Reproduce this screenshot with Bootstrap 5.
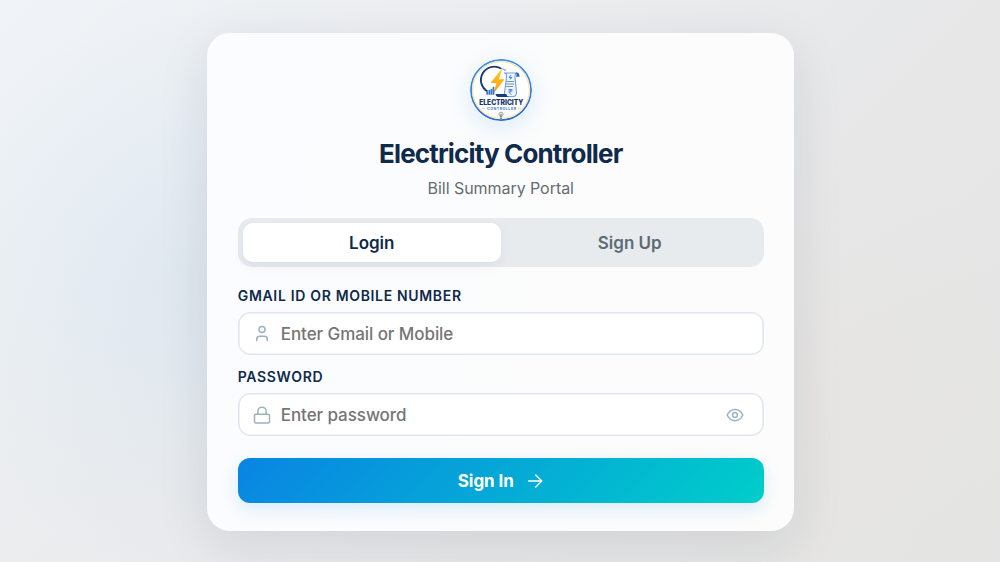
<!DOCTYPE html>
<html lang="en">
<head>
<meta charset="utf-8">
<meta name="viewport" content="width=device-width, initial-scale=1">
<title>Electricity Controller</title>
<link href="https://cdn.jsdelivr.net/npm/bootstrap@5.3.0/dist/css/bootstrap.min.css" rel="stylesheet">
<style>
body{font-family:Inter,"Liberation Sans",sans-serif;color:#0f2a4a;height:100vh;overflow:hidden;
background:radial-gradient(circle at 20% 50%,rgba(9,132,227,.055),transparent 300px),radial-gradient(circle at 82% 72%,rgba(253,203,110,.03),transparent 250px),linear-gradient(135deg,#f0f4f8 0%,#ebedef 35%,#e7e7e8 65%,#e4e4e4 100%)}
.login-card{width:587px;height:498.5px;margin-top:32.5px;margin-left:1.5px;padding:26.5px 30.5px 0;border:0;border-radius:23px;
background:linear-gradient(100deg,#fafcff,#fcfcfc 65%);box-shadow:0 14px 52px rgba(15,30,60,.10)}
.logo{width:62px;height:62px;border-radius:50%;box-shadow:0 6px 24px rgba(9,132,227,.14)}
.title{font-size:26px;line-height:32px;font-weight:700;letter-spacing:-.86px;margin-top:16.5px}
.subtitle{font-size:16px;line-height:22px;letter-spacing:-.05px;color:#636e72;margin-top:7px}
.tabs{height:49px;margin-top:19.5px;padding:5px;border-radius:14px;background:#e8ebee}
.tab{border:0;border-radius:10px;background:transparent;color:#5e6b72;font-size:17px;font-weight:600;padding:1.5px 0 0}
.tab.active{background:#fff;color:#0f2a4a;box-shadow:0 4px 12px rgba(15,30,60,.06)}
.form-area{margin-top:20px}
.field-label{font-size:14px;line-height:18px;font-weight:600;letter-spacing:.67px;margin:0 0 7px}
.second-label{margin-top:13px}
.field{height:43px;border:1px solid #dfe6f0;border-radius:12px;background:#fff;box-shadow:inset 0 0 0 .6px #dfe6f0;padding:0 19px 0 14px}
.field svg{color:#9db1bf;flex:none}
.field input{border:0;outline:0;background:transparent;font-size:17px;font-weight:500;letter-spacing:-.07px;padding:2px 0 0;margin-left:10px;min-width:0}
.field input::placeholder{color:#757575;opacity:1}
.submit{height:45px;margin-top:22.3px;border:0;border-radius:12px;color:#fff;font-size:17px;font-weight:700;letter-spacing:-.08px;padding:1px 0 0;background:linear-gradient(135deg,#0984e3,#00cec9);box-shadow:0 6px 18px rgba(9,132,227,.14)}
.line-icon{fill:none;stroke:currentColor;stroke-width:2;stroke-linecap:round;stroke-linejoin:round}
</style>
</head>
<body class="d-flex justify-content-center align-items-start">
<main class="login-card d-flex flex-column">
<svg class="logo align-self-center flex-shrink-0" viewBox="0 0 62 62" role="img" aria-label="Electricity Controller logo">
<defs>
<linearGradient id="ring" x1="0" y1="0" x2="0" y2="1"><stop stop-color="#368ff3"/><stop offset="1" stop-color="#2b6bd0"/></linearGradient>
<linearGradient id="bolt" x1="0" y1="0" x2="0" y2="1"><stop stop-color="#ffc928"/><stop offset="1" stop-color="#ff9d00"/></linearGradient>
</defs>
<circle cx="31" cy="31" r="30.1" fill="#fff" stroke="url(#ring)" stroke-width="1.8"/>
<circle cx="31" cy="31" r="28.4" fill="none" stroke="#ffd982" stroke-width=".9"/>
<path d="M17.500 32.500A13 13 0 0 1 31 9.500" fill="none" stroke="#153b78" stroke-width="1.9"/>
<path d="M31 9.500q2.800.300 4.800 2" fill="none" stroke="#5a8ed4" stroke-width="1.200"/>
<path d="M34 14H46q3 0 2.800 3.500M35 14q2 1 1.500 4l-2 16q-.5 3.500-3.500 3.500h12.500q2.500 0 3-3.500l-1.500-16q-.2-4 2.500-4" fill="#eaf3ff" stroke="#6c9fe2" stroke-width="1.100"/>
<path d="M46 13.500q3.800 0 3.300 4.200h-3q.5-3-.3-4.200" fill="#2d65b4"/>
<path d="M25.500 35h11q.2 2.800 3 3H28.500q-2.500 0-3-3" fill="#173d7a"/>
<path d="M36.500 22.500h7.500M36.300 25h7.700M36 27.500h7" stroke="#6881aa" stroke-width=".85"/>
<path d="M40.800 16.200l-1.500 2.300h2.400l-1.500 2" fill="none" stroke="#287be0" stroke-width="1"/>
<path d="M38.500 30.500h4M38.500 32h4M39 30.500q3 .5 2 2-.8 1-2 .8l2.500 2.500" fill="none" stroke="#3975cd" stroke-width=".8"/>
<path d="M32.500 9L20.500 24h6l-3 10.500 11-14.200h-5.700L32.500 9" fill="url(#bolt)"/>
<path d="M17.200 35.700v-3.200M19.300 35.700v-4.700M21.400 35.700v-5.700M23.500 35.700v-8" stroke="#3477cf" stroke-width="1.700"/>
<text x="31.300" y="45.700" text-anchor="middle" font-size="7.200" font-weight="800" textLength="44" lengthAdjust="spacingAndGlyphs" fill="#19376c" stroke="#19376c" stroke-width=".15">ELECTRICITY</text>
<text x="31.500" y="50.600" text-anchor="middle" font-size="3.600" font-weight="700" textLength="29" fill="#3979cf">CONTROLLER</text>
<path d="M12 49.300h3M48 49.300h3" stroke="#f4c66c" stroke-width=".8"/>
<circle cx="31" cy="55.300" r="2.100" fill="#ffe9af" stroke="#8695a6" stroke-width=".8"/>
<path d="M29.800 58h2.400M30.200 59.500h1.600M31 55v3" stroke="#557399" stroke-width=".9"/>
<path d="M27.500 54l-.8-.5M34.500 54l.8-.5M27.300 56.500h-.7M34.700 56.500h.7" stroke="#efbb54" stroke-width=".6"/>
</svg>
<h1 class="title text-center mb-0">Electricity Controller</h1>
<p class="subtitle text-center mb-0">Bill Summary Portal</p>
<div class="tabs d-flex flex-shrink-0" role="tablist">
<button class="tab active flex-fill w-50" role="tab" aria-selected="true">Login</button>
<button class="tab flex-fill w-50" role="tab" aria-selected="false">Sign Up</button>
</div>
<form class="form-area d-flex flex-column">
<label class="field-label" for="account">GMAIL ID OR MOBILE NUMBER</label>
<div class="field d-flex align-items-center">
<svg class="line-icon" width="18" height="18" viewBox="0 0 24 24"><path d="M19 21v-2a4 4 0 0 0-4-4H9a4 4 0 0 0-4 4v2"/><circle cx="12" cy="6" r="4"/></svg>
<input id="account" class="flex-fill" type="text" placeholder="Enter Gmail or Mobile">
</div>
<label class="field-label second-label" for="password">PASSWORD</label>
<div class="field d-flex align-items-center">
<svg class="line-icon" width="18" height="18" viewBox="0 0 24 24"><rect x="2" y="11" width="20" height="11.500" rx="2"/><path d="M6.500 11V7a5.500 5.500 0 0 1 11 0v4"/></svg>
<input id="password" class="flex-fill" type="password" placeholder="Enter password">
<svg class="line-icon" width="18" height="18" viewBox="0 0 24 24"><path d="M1.500 12Q5 4.500 12 4.500T22.500 12Q19 19.500 12 19.500T1.500 12z"/><circle cx="12" cy="12" r="3.200"/></svg>
</div>
<button class="submit d-flex justify-content-center align-items-center gap-2" type="button">Sign In
<svg class="line-icon ms-1" width="18" height="18" viewBox="0 0 24 24"><path d="M3.500 12h17M13 4l8 8-8 8"/></svg>
</button>
</form>
</main>
<script src="https://cdn.jsdelivr.net/npm/bootstrap@5.3.0/dist/js/bootstrap.bundle.min.js"></script>
</body>
</html>
